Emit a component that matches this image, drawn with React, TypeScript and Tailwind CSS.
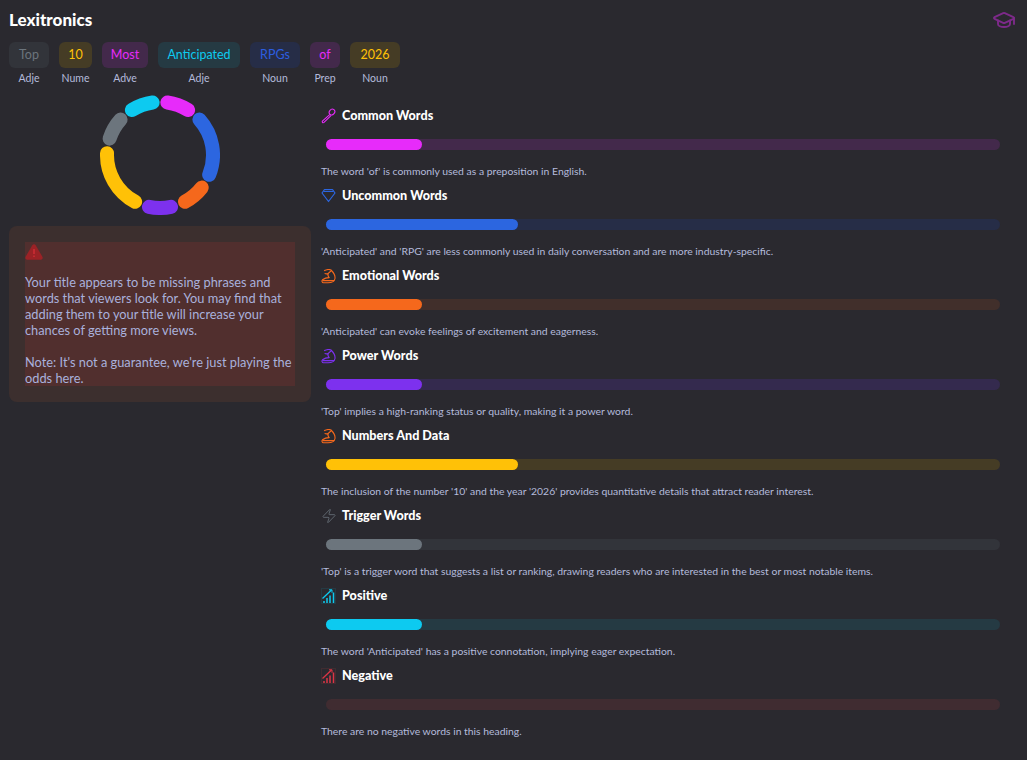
import { GraduationCap, Zap } from 'lucide-react';
import type { ReactNode } from 'react';

const chips = [
  { word: 'Top', pos: 'Adje', width: 'w-[40px]', cls: 'bg-[#32343a] text-[#6c757d]' },
  { word: '10', pos: 'Nume', width: 'w-[33px]', cls: 'bg-[#453c25] text-[#ffc107]' },
  { word: 'Most', pos: 'Adve', width: 'w-[46px]', cls: 'bg-[#43294b] text-[#e72bfa]' },
  { word: 'Anticipated', pos: 'Adje', width: 'w-[82px]', cls: 'bg-[#253a43] text-[#0dcaf0]' },
  { word: 'RPGs', pos: 'Noun', width: 'w-[50px]', cls: 'bg-[#262d47] text-[#2c5ee0]' },
  { word: 'of', pos: 'Prep', width: 'w-[30px]', cls: 'bg-[#43294b] text-[#e72bfa]' },
  { word: '2026', pos: 'Noun', width: 'w-[50px]', cls: 'bg-[#453c25] text-[#ffc107]' },
];

const segments = [
  { start: 0, end: 40, color: '#e72bfa' },
  { start: 40, end: 120, color: '#2c66e0' },
  { start: 120, end: 160, color: '#f5681c' },
  { start: 160, end: 200, color: '#7d31ee' },
  { start: 200, end: 280, color: '#ffc107' },
  { start: 280, end: 320, color: '#6c757d' },
  { start: 320, end: 360, color: '#0dcaf0' },
];

const point = (deg: number) => {
  const rad = (deg * Math.PI) / 180;
  return `${(60 + 53 * Math.sin(rad)).toFixed(2)} ${(60 - 53 * Math.cos(rad)).toFixed(2)}`;
};

const Donut = () => (
  <svg width="120" height="120" viewBox="0 0 120 120">
    {segments.map((s) => (
      <path
        key={s.start}
        d={`M${point(s.start + 8)} A53 53 0 0 1 ${point(s.end - 8)}`}
        fill="none"
        stroke={s.color}
        strokeWidth="14"
        strokeLinecap="round"
      />
    ))}
  </svg>
);

const KeyIcon = () => (
  <svg width="15" height="16" viewBox="0 0 15 16" fill="none" stroke="#e72bfa" strokeWidth="1.1">
    <ellipse cx="11" cy="4" rx="2.6" ry="3" transform="rotate(40 11 4)" />
    <path d="M9 6.3 L1.6 12.8 a1 1 0 0 0 1.4 1.6 L10.2 7.4" />
  </svg>
);

const GemIcon = () => (
  <svg width="15" height="16" viewBox="0 0 15 16" fill="none" stroke="#2c66e0" strokeWidth="1.2" strokeLinejoin="round">
    <path d="M3.5 1.5 H11.5 L14 5 L7.5 13.5 L1 5 Z" />
    <path d="M2.5 3.4 H12.5" />
  </svg>
);

const ArmIcon = ({ color }: { color: string }) => (
  <svg width="15" height="15" viewBox="0 0 15 15" fill="none" stroke={color} strokeWidth="1.1" strokeLinecap="round">
    <path d="M3.5 1.6 C5.5 0.6 8 0 10 1 C12 3 14.5 6 14 9.5 C13.5 12.5 10 13.8 7 13.8 H2.5 C1 13.8 0.5 11.8 1.5 10.8 C3.5 9.3 6.5 8.6 8 8.6" />
    <path d="M8 8.6 C6.6 6.6 6.6 5.2 7.5 4.2 L10 2 M7.5 4.2 C6 5 5 5 4 4.6" />
    <path d="M2 11.6 H12.8" />
  </svg>
);

const BarsIcon = ({ color, frame }: { color: string; frame: string }) => (
  <svg width="15" height="16" viewBox="0 0 15 16" fill="none">
    <rect x="0.5" y="0.5" width="14" height="15" stroke={frame} strokeWidth="1" />
    <path d="M1.5 10.5 L10.5 2" stroke={color} strokeWidth="1.3" />
    <path d="M8 1.8 H11 V4.8" stroke={color} strokeWidth="1" />
    <path d="M3 15 V13 M6 15 V10 M9 15 V7.5 M12.5 15 V4.5" stroke={color} strokeWidth="1.5" />
  </svg>
);

const WarningIcon = () => (
  <svg width="18" height="16" viewBox="0 0 18 16">
    <path
      d="M7.3 1.2 a2 2 0 0 1 3.4 0 L17.4 12.8 a2 2 0 0 1 -1.7 3 H2.3 a2 2 0 0 1 -1.7 -3 Z"
      fill="#9b2226"
    />
    <path d="M9 5 V10 M9 11.6 V13" stroke="#e3303a" strokeWidth="1.1" />
  </svg>
);

type Row = {
  title: string;
  text: string;
  icon: ReactNode;
  fill: string;
  track: string;
  width: string;
};

const rows: Row[] = [
  {
    title: 'Common Words',
    text: "The word 'of' is commonly used as a preposition in English.",
    icon: <KeyIcon />,
    fill: 'bg-[#e72bfa]',
    track: 'bg-[#43294b]',
    width: 'w-[96px]',
  },
  {
    title: 'Uncommon Words',
    text: "'Anticipated' and 'RPG' are less commonly used in daily conversation and are more industry-specific.",
    icon: <GemIcon />,
    fill: 'bg-[#2c66e0]',
    track: 'bg-[#262d47]',
    width: 'w-[192px]',
  },
  {
    title: 'Emotional Words',
    text: "'Anticipated' can evoke feelings of excitement and eagerness.",
    icon: <ArmIcon color="#f5681c" />,
    fill: 'bg-[#f5681c]',
    track: 'bg-[#412f2b]',
    width: 'w-[96px]',
  },
  {
    title: 'Power Words',
    text: "'Top' implies a high-ranking status or quality, making it a power word.",
    icon: <ArmIcon color="#7d31ee" />,
    fill: 'bg-[#7d31ee]',
    track: 'bg-[#342a4e]',
    width: 'w-[96px]',
  },
  {
    title: 'Numbers And Data',
    text: "The inclusion of the number '10' and the year '2026' provides quantitative details that attract reader interest.",
    icon: <ArmIcon color="#f5681c" />,
    fill: 'bg-[#ffc107]',
    track: 'bg-[#453c25]',
    width: 'w-[192px]',
  },
  {
    title: 'Trigger Words',
    text: "'Top' is a trigger word that suggests a list or ranking, drawing readers who are interested in the best or most notable items.",
    icon: <Zap size={16} strokeWidth={1.2} className="text-[#6c757d]" />,
    fill: 'bg-[#6c757d]',
    track: 'bg-[#32343a]',
    width: 'w-[96px]',
  },
  {
    title: 'Positive',
    text: "The word 'Anticipated' has a positive connotation, implying eager expectation.",
    icon: <BarsIcon color="#0dcaf0" frame="#253a43" />,
    fill: 'bg-[#0dcaf0]',
    track: 'bg-[#253a43]',
    width: 'w-[96px]',
  },
  {
    title: 'Negative',
    text: 'There are no negative words in this heading.',
    icon: <BarsIcon color="#dc3545" frame="#402c31" />,
    fill: 'bg-transparent',
    track: 'bg-[#402c31]',
    width: 'w-0',
  },
];

const WordRow = ({ row }: { row: Row }) => (
  <div className="h-[80px]">
    <div className="flex h-[20px] items-center">
      <div className="flex w-[21px] shrink-0">{row.icon}</div>
      <span className="text-[12.6px] font-black leading-none text-white">{row.title}</span>
    </div>
    <div className={`ml-[5px] mr-[27px] mt-[13px] h-[11px] rounded-full ${row.track}`}>
      <div className={`h-full rounded-full ${row.width} ${row.fill}`} />
    </div>
    <p className="mt-[14px] text-[10.4px] leading-[14px] text-[#b4bbdc]">{row.text}</p>
  </div>
);

const App = () => {
  return (
    <div className="h-[760px] w-[1027px] overflow-hidden bg-[#2a292f] font-['Lato',sans-serif]">
      <div className="flex items-center justify-between pl-[9px] pr-[11px] pt-[8px]">
        <h1 className="text-[17px] font-black leading-[22px] text-white">Lexitronics</h1>
        <GraduationCap size={24} strokeWidth={1.9} className="text-[#7d2a8a]" />
      </div>
      <div className="mt-[10px] flex gap-[10px] pl-[9px]">
        {chips.map((chip, i) => (
          <div key={i} className="flex flex-col items-center">
            <div
              className={`flex h-[26px] items-center justify-center rounded-md text-[12.5px] ${chip.width} ${chip.cls}`}
            >
              {chip.word}
            </div>
            <span className="mt-[3px] text-[10.5px] leading-[14px] text-[#b4bbdc]">{chip.pos}</span>
          </div>
        ))}
      </div>
      <div className="mt-[9px] flex pl-[9px]">
        <div className="w-[302px] shrink-0 pt-px">
          <div className="flex justify-center">
            <Donut />
          </div>
          <div className="mt-[11px] rounded-lg bg-[#3c2f2e] p-4">
            <div className="bg-[#512f2e] text-[12.8px] leading-4 text-[#a9b1dc]">
              <div className="mb-[14px] pt-[2px]">
                <WarningIcon />
              </div>
              <p>
                Your title appears to be missing phrases and words that viewers look for. You may find that
                adding them to your title will increase your chances of getting more views.
              </p>
              <p className="mt-4">Note: It's not a guarantee, we're just playing the odds here.</p>
            </div>
          </div>
        </div>
        <div className="ml-[10px] flex-1 pt-[12px]">
          {rows.map((row) => (
            <WordRow key={row.title} row={row} />
          ))}
        </div>
      </div>
    </div>
  );
};

export default App;
